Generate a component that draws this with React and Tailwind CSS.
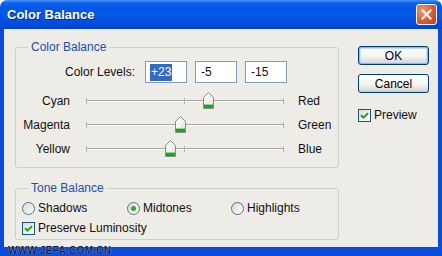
import React from "react";

const sliders = [
  { left: "Cyan", right: "Red", value: 23 },
  { left: "Magenta", right: "Green", value: -5 },
  { left: "Yellow", right: "Blue", value: -15 },
];

function Thumb() {
  return (
    <svg width="11" height="17" viewBox="0 0 11 17">
      <defs>
        <linearGradient id="thumbg" x1="0" y1="0" x2="1" y2="1">
          <stop offset="0" stopColor="#ffffff" />
          <stop offset="1" stopColor="#e2e2da" />
        </linearGradient>
      </defs>
      <path d="M5.5 0.5 L10.5 5.5 L10.5 16.5 L0.5 16.5 L0.5 5.5 Z" fill="url(#thumbg)" stroke="#7f8c90" />
      <rect x="1" y="12" width="9" height="1" fill="#8fd48f" />
      <rect x="1" y="13" width="9" height="3" fill="#21a121" />
    </svg>
  );
}

function Slider({ left, right, value }) {
  const pct = (value + 100) / 2;
  return (
    <div className="flex h-[24px] items-center">
      <div className="w-[54px] text-right">{left}</div>
      <div className="relative ml-[16px] flex h-full w-[198px] items-center">
        <div className="h-[2px] w-full border-t border-[#aaa9a0] bg-white" />
        <div className="absolute left-0 top-[9px] h-[6px] w-px bg-[#b4b3aa]" />
        <div className="absolute left-[98px] top-[9px] h-[6px] w-px bg-[#b4b3aa]" />
        <div className="absolute right-0 top-[9px] h-[6px] w-px bg-[#b4b3aa]" />
        <div className="absolute top-[3px]" style={{ left: `calc(${pct}% - 5px)` }}>
          <Thumb />
        </div>
      </div>
      <div className="ml-[14px]">{right}</div>
    </div>
  );
}

function Check() {
  return (
    <span className="flex h-[13px] w-[13px] shrink-0 items-center justify-center border border-[#1c5180] bg-[linear-gradient(135deg,#dcdcd4,#ffffff)]">
      <svg width="9" height="9" viewBox="0 0 9 9">
        <path d="M1 4.2 L3.5 6.7 L8 2.2" stroke="#21a121" strokeWidth="2" fill="none" />
      </svg>
    </span>
  );
}

function Radio({ checked }) {
  return (
    <span className="flex h-[13px] w-[13px] shrink-0 items-center justify-center rounded-full border border-[#56708c] bg-[linear-gradient(135deg,#d8d8d0,#ffffff)]">
      {checked && <span className="h-[5px] w-[5px] rounded-full bg-[#2aab2a]" />}
    </span>
  );
}

function Button({ children, isDefault }) {
  return (
    <button
      className={
        "flex h-[19px] w-[71px] items-center justify-center rounded-[3px] border border-[#003c74] bg-[linear-gradient(to_bottom,#ffffff,#f4f4f0_55%,#d8d3c9)] text-[12px] leading-none text-black " +
        (isDefault ? "shadow-[inset_0_0_0_1px_#8fb3ee,inset_0_0_0_2px_#c9dbf8]" : "shadow-[inset_0_-1px_0_#cfc9bd]")
      }
    >
      {children}
    </button>
  );
}

export default function App() {
  return (
    <div className="relative h-[256px] w-[442px] overflow-hidden rounded-t-[7px] bg-white font-['Liberation_Sans',Arial,sans-serif] text-[12px] leading-[14px] text-[#111]">
      {/* Title bar */}
      <div className="flex h-[29px] items-center justify-between bg-[linear-gradient(to_bottom,#4a95f6_0px,#0e62ea_3px,#0256e6_8px,#045ae9_15px,#0049d9_26px,#003ecb_29px)] pl-[7px] pr-[5px]">
        <span className="text-[13px] font-bold leading-none text-white [text-shadow:1px_1px_0_#0a2a8a]">Color Balance</span>
        <div className="flex h-[21px] w-[21px] items-center justify-center rounded-[3px] border border-white bg-[radial-gradient(circle_at_30%_30%,#f09a78,#d85a32_55%,#c23d1b)]">
          <svg width="11" height="11" viewBox="0 0 11 11">
            <path d="M1.5 1.5 L9.5 9.5 M9.5 1.5 L1.5 9.5" stroke="#ffffff" strokeWidth="2" strokeLinecap="square" />
          </svg>
        </div>
      </div>

      {/* Body */}
      <div className="flex h-[227px] border-b-[9px] border-l-[4px] border-r-[4px] border-[#0a4bdc] bg-[#edece7]">
        {/* Left column */}
        <div className="flex flex-col pl-[11px] pt-[11px]">
          <fieldset className="box-border h-[128px] w-[324px] rounded-[3px] border border-[#cfcfc4]">
            <legend className="ml-[12px] px-[3px] text-[12px] leading-[14px] text-[#1c4fb5]">Color Balance</legend>
            <div className="mt-[7px] flex h-[22px] items-center">
              <div className="w-[119px] text-right">Color Levels:</div>
              <div className="ml-[10px] flex h-[22px] w-[42px] items-center border border-[#7f9db9] bg-white pl-[4px]">
                <span className="bg-[#316ac5] px-[1px] leading-[17px] text-white">+23</span>
              </div>
              <div className="ml-[8px] flex h-[22px] w-[42px] items-center border border-[#7f9db9] bg-white pl-[5px]">-5</div>
              <div className="ml-[8px] flex h-[22px] w-[42px] items-center border border-[#7f9db9] bg-white pl-[5px]">-15</div>
            </div>
            <div className="mt-[6px] flex flex-col">
              {sliders.map((s) => (
                <Slider key={s.left} {...s} />
              ))}
            </div>
          </fieldset>

          <fieldset className="mt-[13px] box-border h-[59px] w-[324px] rounded-[3px] border border-[#cfcfc4]">
            <legend className="ml-[12px] px-[3px] text-[12px] leading-[14px] text-[#1c4fb5]">Tone Balance</legend>
            <div className="mt-[5px] flex h-[16px] items-center pl-[6px]">
              <label className="flex w-[105px] items-center gap-[3px]">
                <Radio />
                <span>Shadows</span>
              </label>
              <label className="flex w-[104px] items-center gap-[3px]">
                <Radio checked />
                <span>Midtones</span>
              </label>
              <label className="flex items-center gap-[3px]">
                <Radio />
                <span>Highlights</span>
              </label>
            </div>
            <div className="mt-[4px] flex h-[16px] items-center gap-[3px] pl-[6px]">
              <Check />
              <span>Preserve Luminosity</span>
            </div>
          </fieldset>
        </div>

        {/* Right column */}
        <div className="ml-[19px] flex flex-col pt-[17px]">
          <Button isDefault>OK</Button>
          <div className="mt-[9px]">
            <Button>Cancel</Button>
          </div>
          <div className="mt-[15px] flex items-center gap-[3px]">
            <Check />
            <span>Preview</span>
          </div>
        </div>
      </div>

      {/* Watermark overlay */}
      <div className="absolute bottom-[0px] left-[8px] text-[10px] font-bold leading-[10px] tracking-[0.3px] text-[#101c45] [text-shadow:0_0_1px_#c8d4ff]">
        WWW.JEFA.COM.CN
      </div>
    </div>
  );
}
